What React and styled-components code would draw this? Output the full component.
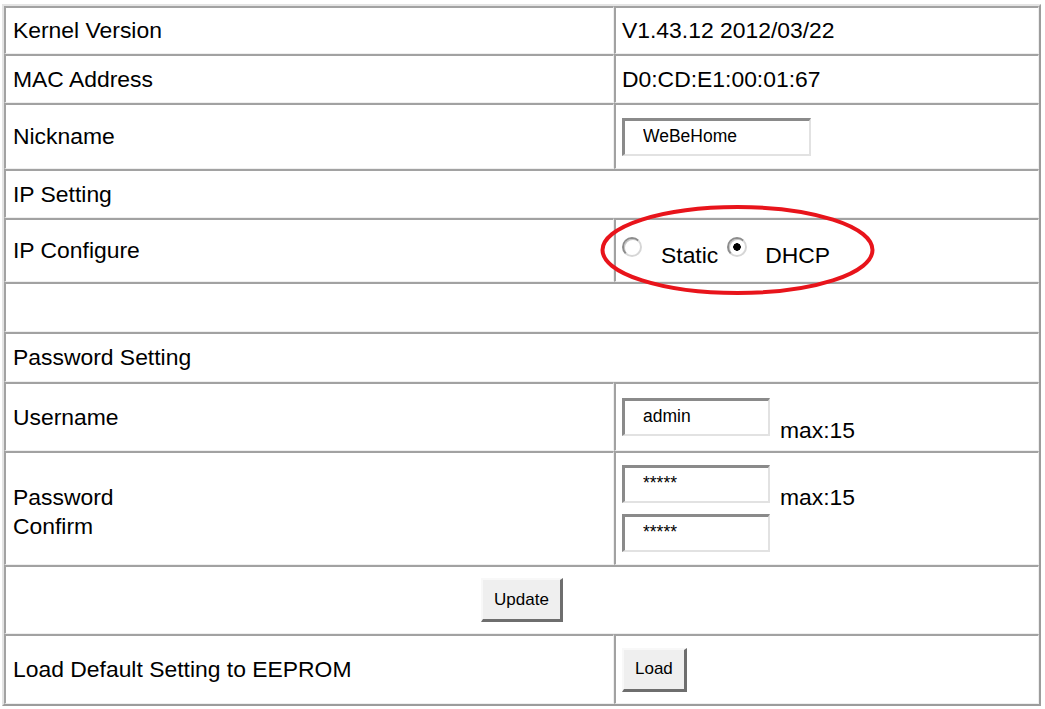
import React from "react";
import styled, { createGlobalStyle } from "styled-components";

const GlobalStyle = createGlobalStyle`
  body {
    margin: 0;
    background: #ffffff;
    font-family: "Liberation Sans", Arial, sans-serif;
    color: #000;
  }
`;

const Page = styled.div`
  padding: 4px 4px 4px 2px;
`;

const Table = styled.table`
  width: 1039px;
  border-collapse: separate;
  border-spacing: 0;
  border: 2px solid;
  border-color: #e4e4e4 #9c9c9c #9c9c9c #e4e4e4;
  font-size: 22.9px;
`;

const Cell = styled.td`
  height: ${(p) => p.$h}px;
  padding: 0 7px;
  vertical-align: middle;
  text-align: ${(p) => (p.$center ? "center" : "left")};
  border-top: 2px solid #a2a2a2;
  border-left: 2px solid #a2a2a2;
  border-bottom: 1px solid #efefef;
  border-right: 1px solid #efefef;
  box-sizing: border-box;
`;

const LabelCell = styled(Cell)`
  width: 610px;
`;

const ValueCell = styled(Cell)`
  padding: 0 6px;
  position: relative;
`;

const TextInput = styled.input`
  box-sizing: border-box;
  width: ${(p) => p.$w}px;
  height: 38px;
  padding: 0 0 2px 18px;
  margin: 0;
  font-family: "Liberation Sans", Arial, sans-serif;
  font-size: 17.5px;
  color: #000;
  background: #fff;
  border-style: solid;
  border-width: 3px 2px 2px 3px;
  border-color: #8a8a8a #e2e2e2 #e2e2e2 #8a8a8a;
  outline: none;
`;

const Field = styled.div`
  display: flex;
  align-items: flex-end;
  gap: 10px;
`;

const Hint = styled.span`
  line-height: 1;
  margin-bottom: -6px;
`;

const Stack = styled.div`
  display: flex;
  flex-direction: column;
  gap: 11px;
`;

const Button = styled.button`
  height: 44px;
  padding: 0 11px;
  font-family: "Liberation Sans", Arial, sans-serif;
  font-size: 17px;
  color: #000;
  background: #efefef;
  border-style: solid;
  border-width: 2px 3px 3px 2px;
  border-color: #f8f8f8 #6e6e6e #6e6e6e #f8f8f8;
  cursor: pointer;
`;

const RadioGroup = styled.div`
  display: flex;
  align-items: center;
  padding-top: 10px;
`;

const Radio = styled.input.attrs({ type: "radio" })`
  appearance: none;
  box-sizing: border-box;
  width: 20px;
  height: 20px;
  margin: 0 ${(p) => p.$gap}px 18px 0;
  border-radius: 50%;
  border: 2px solid #9a9a9a;
  border-color: #8c8c8c #d6d6d6 #d6d6d6 #8c8c8c;
  background: ${(p) =>
    p.checked
      ? "radial-gradient(circle, #000 0 3.5px, #fff 4px)"
      : "#fff"};
  box-shadow: inset 1px 1px 0 #c8c8c8;
`;

const RadioText = styled.span`
  margin-right: ${(p) => p.$gap}px;
`;

const Highlight = styled.svg`
  position: absolute;
  left: -16px;
  top: -16px;
  width: 275px;
  height: 92px;
  overflow: visible;
  pointer-events: none;
`;

const Password = styled.div`
  line-height: 29px;
  padding-top: 6px;
`;

export default function App() {
  return (
    <Page>
      <GlobalStyle />
      <Table>
        <tbody>
          <tr>
            <LabelCell $h={48}>Kernel Version</LabelCell>
            <ValueCell $h={48}>V1.43.12 2012/03/22</ValueCell>
          </tr>
          <tr>
            <LabelCell $h={49}>MAC Address</LabelCell>
            <ValueCell $h={49}>D0:CD:E1:00:01:67</ValueCell>
          </tr>
          <tr>
            <LabelCell $h={66}>Nickname</LabelCell>
            <ValueCell $h={66}>
              <Field>
                <TextInput $w={189} defaultValue="WeBeHome" readOnly />
              </Field>
            </ValueCell>
          </tr>
          <tr>
            <Cell colSpan={2} $h={49}>IP Setting</Cell>
          </tr>
          <tr>
            <LabelCell $h={64}>IP Configure</LabelCell>
            <ValueCell $h={64}>
              <RadioGroup>
                <Radio name="ip" $gap={19} checked={false} readOnly />
                <RadioText $gap={9}>Static</RadioText>
                <Radio name="ip" $gap={18} checked readOnly />
                <RadioText $gap={0}>DHCP</RadioText>
              </RadioGroup>
              <Highlight viewBox="0 0 275 92">
                <ellipse
                  cx="137.5"
                  cy="46"
                  rx="135"
                  ry="43"
                  fill="none"
                  stroke="#e8141b"
                  strokeWidth="4"
                />
              </Highlight>
            </ValueCell>
          </tr>
          <tr>
            <Cell colSpan={2} $h={50} />
          </tr>
          <tr>
            <Cell colSpan={2} $h={50}>Password Setting</Cell>
          </tr>
          <tr>
            <LabelCell $h={69}>Username</LabelCell>
            <ValueCell $h={69}>
              <Field>
                <TextInput $w={148} defaultValue="admin" readOnly />
                <Hint>max:15</Hint>
              </Field>
            </ValueCell>
          </tr>
          <tr>
            <LabelCell $h={114}>
              <Password>
                Password
                <br />
                Confirm
              </Password>
            </LabelCell>
            <ValueCell $h={114}>
              <Stack>
                <Field>
                  <TextInput $w={148} defaultValue="*****" readOnly />
                  <Hint>max:15</Hint>
                </Field>
                <Field>
                  <TextInput $w={148} defaultValue="*****" readOnly />
                </Field>
              </Stack>
            </ValueCell>
          </tr>
          <tr>
            <Cell colSpan={2} $h={69} $center>
              <Button>Update</Button>
            </Cell>
          </tr>
          <tr>
            <LabelCell $h={70}>Load Default Setting to EEPROM</LabelCell>
            <ValueCell $h={70}>
              <Button>Load</Button>
            </ValueCell>
          </tr>
        </tbody>
      </Table>
    </Page>
  );
}
